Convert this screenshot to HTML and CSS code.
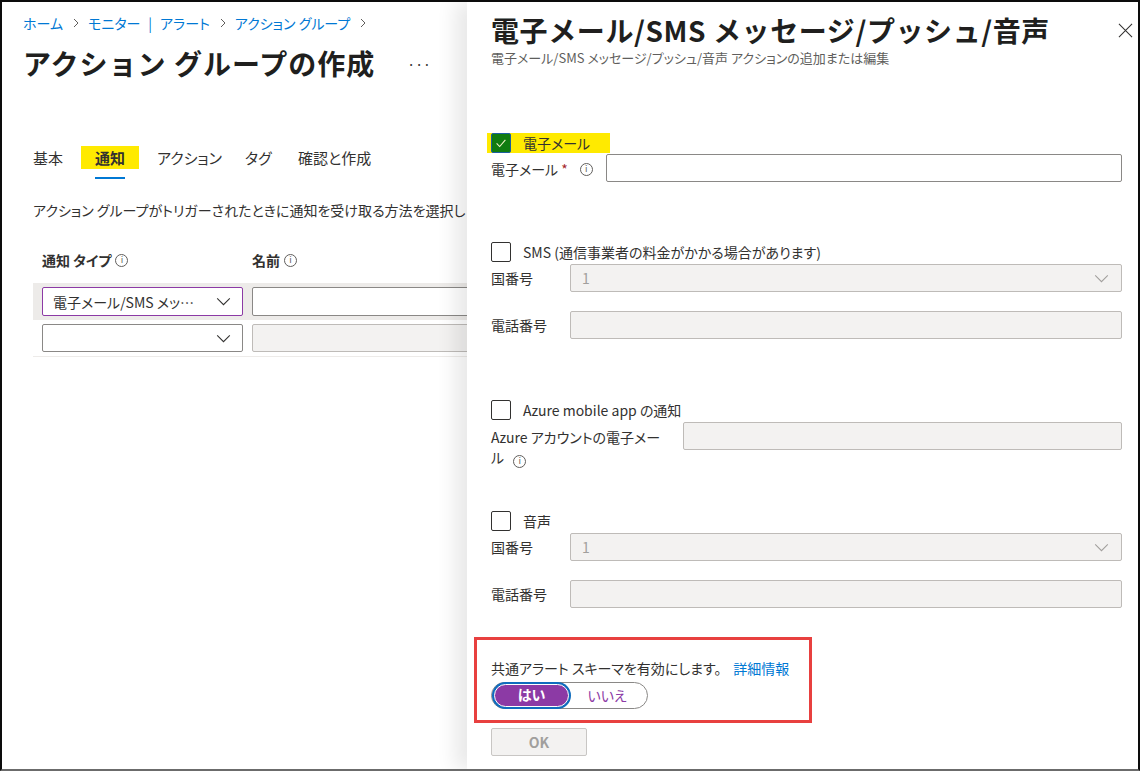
FILE: index.html
```html
<!DOCTYPE html>
<html lang="ja">

<head>
    <meta charset="UTF-8">
    <meta name="viewport" content="width=device-width, initial-scale=1.0">
    <title>アクション グループの作成</title>
    <link rel="stylesheet" href="styles.css">
</head>

<body>
    <div class="screen">
        <!-- 左側: アクション グループの作成 -->
        <section class="blade">
            <nav class="crumbs">
                <a href="#">ホーム</a>
                <svg class="crumb-sep" viewBox="0 0 8 12"><polyline points="2,2 6,6 2,10" /></svg>
                <a href="#">モニター<span class="bar">|</span>アラート</a>
                <svg class="crumb-sep" viewBox="0 0 8 12"><polyline points="2,2 6,6 2,10" /></svg>
                <a href="#">アクション グループ</a>
                <svg class="crumb-sep" viewBox="0 0 8 12"><polyline points="2,2 6,6 2,10" /></svg>
            </nav>

            <div class="page-title">
                <h1>アクション グループの作成</h1>
                <span class="more">···</span>
            </div>

            <div class="tabs">
                <span class="tab"><span class="tab-text">基本</span></span>
                <span class="tab active"><span class="tab-text"><span class="mark">通知</span></span></span>
                <span class="tab"><span class="tab-text">アクション</span></span>
                <span class="tab"><span class="tab-text">タグ</span></span>
                <span class="tab"><span class="tab-text">確認と作成</span></span>
            </div>

            <p class="desc">アクション グループがトリガーされたときに通知を受け取る方法を選択します。</p>

            <div class="notify-table">
                <div class="thead">
                    <span class="th">通知 タイプ <i class="info">i</i></span>
                    <span class="th">名前 <i class="info">i</i></span>
                </div>
                <div class="trow selected">
                    <div class="select purple">
                        <span>電子メール/SMS メッ…</span>
                        <svg class="chev" viewBox="0 0 16 10"><polyline points="1,1.5 8,8.5 15,1.5" /></svg>
                    </div>
                    <div class="field"></div>
                </div>
                <div class="trow">
                    <div class="select">
                        <span></span>
                        <svg class="chev" viewBox="0 0 16 10"><polyline points="1,1.5 8,8.5 15,1.5" /></svg>
                    </div>
                    <div class="field disabled"></div>
                </div>
            </div>
        </section>

        <!-- 右側: コンテキスト ペイン -->
        <aside class="panel">
            <div class="panel-head">
                <h2>電子メール/SMS メッセージ/プッシュ/音声</h2>
                <svg class="close" viewBox="0 0 16 16"><path d="M1 1 L15 15 M15 1 L1 15" /></svg>
            </div>
            <p class="panel-sub">電子メール/SMS メッセージ/プッシュ/音声 アクションの追加または編集</p>

            <div class="check marked email-check">
                <span class="box on">
                    <svg viewBox="0 0 16 16"><polyline points="3,8.5 6.5,12 13,4.5" /></svg>
                </span>
                <span>電子メール</span>
            </div>
            <div class="form-row">
                <label class="lbl w-email">電子メール<span class="req">*</span> <i class="info">i</i></label>
                <div class="field"></div>
            </div>

            <div class="check sms-check">
                <span class="box"></span>
                <span>SMS (通信事業者の料金がかかる場合があります)</span>
            </div>
            <div class="form-row country">
                <label class="lbl w-short">国番号</label>
                <div class="field disabled dropdown">
                    <span>1</span>
                    <svg class="chev" viewBox="0 0 16 10"><polyline points="1,1.5 8,8.5 15,1.5" /></svg>
                </div>
            </div>
            <div class="form-row phone">
                <label class="lbl w-short">電話番号</label>
                <div class="field disabled"></div>
            </div>

            <div class="check app-check">
                <span class="box"></span>
                <span>Azure mobile app の通知</span>
            </div>
            <div class="form-row app-row">
                <label class="lbl w-app">Azure アカウントの電子メール <i class="info">i</i></label>
                <div class="field disabled"></div>
            </div>

            <div class="check voice-check">
                <span class="box"></span>
                <span>音声</span>
            </div>
            <div class="form-row country">
                <label class="lbl w-short">国番号</label>
                <div class="field disabled dropdown">
                    <span>1</span>
                    <svg class="chev" viewBox="0 0 16 10"><polyline points="1,1.5 8,8.5 15,1.5" /></svg>
                </div>
            </div>
            <div class="form-row phone">
                <label class="lbl w-short">電話番号</label>
                <div class="field disabled"></div>
            </div>

            <div class="schema-box">
                <p class="schema-text">共通アラート スキーマを有効にします。<a href="#">詳細情報</a></p>
                <div class="toggle">
                    <span class="opt on">はい</span>
                    <span class="opt">いいえ</span>
                </div>
            </div>

            <button class="ok" disabled>OK</button>
        </aside>
    </div>
</body>

</html>
```

FILE: styles.css
```css
* {
    box-sizing: border-box;
}

body {
    margin: 0;
    font-family: "Noto Sans CJK JP", sans-serif;
    font-feature-settings: "palt";
    color: #323130;
    background: #fff;
}

.screen {
    width: 1140px;
    height: 771px;
    display: flex;
    border: 2px solid #0c0c0c;
    border-bottom-color: #6b6b6b;
    overflow: hidden;
}

a {
    color: #0078d4;
    text-decoration: none;
}

/* ---------- 左ブレード ---------- */

.blade {
    width: 465px;
    flex: none;
    overflow: hidden;
    padding: 11px 0 0 21px;
}

.crumbs {
    display: flex;
    align-items: center;
    font-size: 14px;
    line-height: 20px;
    white-space: nowrap;
}

.crumbs .bar {
    margin: 0 8px;
}

.crumb-sep {
    width: 8px;
    height: 12px;
    margin: 0 8px 0 9px;
    fill: none;
    stroke: #605e5c;
    stroke-width: 1;
}

.page-title {
    display: flex;
    align-items: center;
    margin-top: 12px;
}

.page-title h1 {
    margin: 0;
    font-size: 28px;
    line-height: 36px;
    font-weight: 700;
    font-feature-settings: normal;
    letter-spacing: 1px;
    color: #201f1e;
    white-space: nowrap;
}

.more {
    margin: 2px 0 0 32px;
    font-size: 14px;
    color: #323130;
}

.tabs {
    display: grid;
    grid-template-columns: 62px 62px 88px 53px auto;
    margin: 66px 0 0 10px;
    font-size: 15px;
    line-height: 22px;
}

.tab {
    white-space: nowrap;
}

.tab-text {
    display: inline-block;
    padding-bottom: 8px;
    border-bottom: 2px solid transparent;
}

.tab.active .tab-text {
    border-bottom-color: #0078d4;
    font-weight: 700;
}

.mark {
    background: #ffea00;
    padding: 1px 14px;
    margin: 0 -14px;
}

.desc {
    margin: 21px 0 0 10px;
    font-size: 14px;
    line-height: 20px;
    white-space: nowrap;
}

.notify-table {
    margin: 30px 0 0 10px;
    width: 700px;
}

.thead {
    display: grid;
    grid-template-columns: 210px 1fr;
    padding-left: 9px;
    font-size: 14px;
    line-height: 20px;
    font-weight: 700;
}

.th {
    display: flex;
    align-items: center;
    gap: 4px;
}

.info {
    display: inline-flex;
    align-items: center;
    justify-content: center;
    width: 13px;
    height: 13px;
    border: 1px solid #605e5c;
    border-radius: 50%;
    font-size: 9px;
    line-height: 1;
    font-style: normal;
    font-weight: 400;
    color: #605e5c;
    font-family: "DejaVu Sans", sans-serif;
}

.trow {
    display: grid;
    grid-template-columns: 201px 1fr;
    gap: 9px;
    padding: 4px 0 4px 9px;
}

.thead + .trow {
    margin-top: 13px;
}

.trow.selected {
    background: #edebe9;
}

.trow + .trow {
    border-bottom: 1px solid #edebe9;
}

.select {
    height: 29px;
    display: flex;
    align-items: center;
    justify-content: space-between;
    padding: 0 11px 0 10px;
    border: 1px solid #8a8886;
    border-radius: 2px;
    background: #fff;
    font-size: 14px;
    white-space: nowrap;
}

.select.purple {
    border-color: #8c3aa5;
}

.trow + .trow .select,
.trow + .trow .field {
    height: 28px;
}

.chev {
    width: 15px;
    height: 9px;
    flex: none;
    fill: none;
    stroke: #323130;
    stroke-width: 1.2;
}

.field {
    height: 29px;
    border: 1px solid #8a8886;
    border-radius: 2px;
    background: #fff;
}

.field.disabled {
    background: #f3f2f1;
    border-color: #bebbb8;
}

/* ---------- 右パネル ---------- */

.panel {
    position: relative;
    z-index: 1;
    flex: 1;
    padding: 11px 16px 0 24px;
    background: #fff;
    box-shadow: -12px 0 18px rgba(0, 0, 0, 0.09);
    font-size: 14px;
}

.panel-head {
    display: flex;
    justify-content: space-between;
    align-items: center;
}

.panel-head h2 {
    margin: 0;
    font-size: 28px;
    line-height: 34px;
    font-weight: 700;
    font-feature-settings: normal;
    letter-spacing: 0.6px;
    color: #201f1e;
    white-space: nowrap;
}

.close {
    width: 15px;
    height: 15px;
    margin-right: -11px;
    fill: none;
    stroke: #323130;
    stroke-width: 1.1;
}

.panel-sub {
    margin: 2px 0 0;
    font-size: 13px;
    line-height: 18px;
    color: #605e5c;
}

.check {
    display: flex;
    align-items: center;
    gap: 12px;
    height: 20px;
    line-height: 20px;
    white-space: nowrap;
}

.box {
    width: 20px;
    height: 20px;
    flex: none;
    border: 1px solid #323130;
    border-radius: 2px;
    background: #fff;
}

.box.on {
    background: #107c10;
    border-color: #1c5f9e;
    display: flex;
    align-items: center;
    justify-content: center;
}

.box svg {
    width: 14px;
    height: 14px;
    fill: none;
    stroke: #f4f4c8;
    stroke-width: 1.2;
}

.check.marked {
    width: fit-content;
    background: #ffea00;
    padding: 0 20px 0 4px;
    margin-left: -4px;
}

.email-check {
    margin-top: 66px;
}

.sms-check {
    margin-top: 60px;
}

.app-check {
    margin-top: 61px;
}

.voice-check {
    margin-top: 43px;
}

.form-row {
    display: flex;
    align-items: center;
    margin-top: 1px;
}

.form-row .field {
    flex: 1;
    height: 28px;
}

.form-row.country {
    margin-top: 2px;
}

.form-row.phone {
    margin-top: 19px;
}

.lbl {
    flex: none;
    line-height: 20px;
}

.w-email {
    width: 115px;
    display: flex;
    align-items: center;
    padding-top: 2px;
}

.w-email .info {
    margin-left: 12px;
}

.req {
    color: #a4262c;
    margin-left: 3px;
}

.w-short {
    width: 79px;
}

.w-app {
    width: 192px;
    padding: 5px 20px 0 0;
}

.w-app .info {
    margin-left: 6px;
    vertical-align: -1px;
}

.form-row.app-row {
    align-items: flex-start;
    margin-top: 2px;
}

.dropdown {
    display: flex;
    align-items: center;
    justify-content: space-between;
    padding: 0 12px 0 11px;
    color: #a19f9d;
}

.dropdown .chev {
    stroke: #a19f9d;
}

.schema-box {
    width: 338px;
    margin: 29px 0 0 -17px;
    padding: 18px 10px 11px 14px;
    border: 3px solid #e8403f;
}

.schema-text {
    margin: 0;
    line-height: 20px;
}

.schema-text a {
    margin-left: 12px;
}

.toggle {
    display: flex;
    align-items: center;
    width: 157px;
    height: 27px;
    margin-top: 4px;
    padding: 0 2px;
    border: 1px solid #8a8886;
    border-radius: 14px;
}

.opt {
    flex: 1;
    text-align: center;
    color: #8c3aa5;
    line-height: 19px;
}

.opt.on {
    flex: none;
    width: 75px;
    height: 23px;
    border-radius: 12px;
    background: #8c3aa5;
    color: #fff;
    font-weight: 700;
    border: 1px solid #fff;
    box-shadow: 0 0 0 2px #0f6cbd;
}

.ok {
    display: block;
    width: 96px;
    height: 28px;
    margin-top: 5px;
    border: 1px solid #c8c6c4;
    border-radius: 2px;
    background: #f3f2f1;
    color: #a19f9d;
    font-family: inherit;
    font-size: 14px;
    font-weight: 700;
}
```
